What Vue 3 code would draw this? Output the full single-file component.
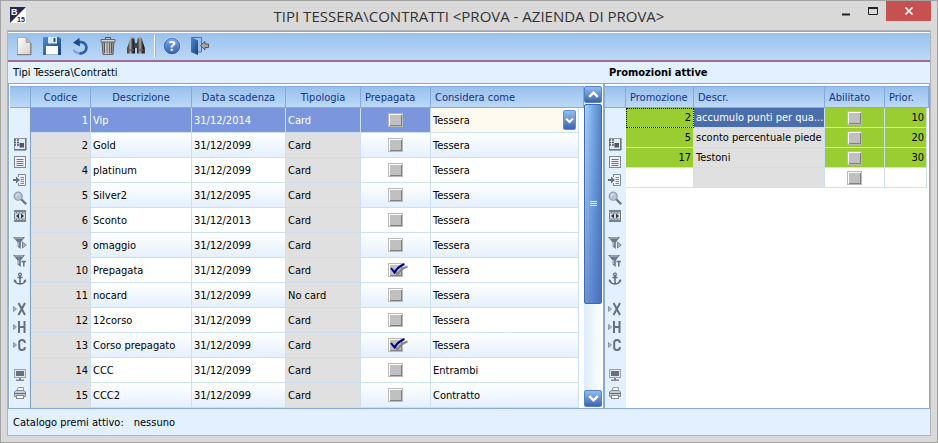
<script setup>
import { ref } from 'vue'

const toolbar = [
  { id: 'new', label: 'Nuovo' },
  { id: 'save', label: 'Salva' },
  { id: 'undo', label: 'Annulla' },
  { id: 'trash', label: 'Elimina' },
  { id: 'find', label: 'Cerca' },
  { id: 'sep' },
  { id: 'help', label: 'Guida' },
  { id: 'exit', label: 'Esci' },
]

const gutterGroups = [
  [['columns', 'Colonne'], ['list', 'Elenco'], ['insert', 'Inserisci'], ['zoom', 'Ingrandisci'], ['fit', 'Adatta']],
  [['filter', 'Filtra'], ['filterText', 'Filtro testo'], ['anchor', 'Ancora']],
  [['x', 'Esporta X'], ['h', 'Esporta H'], ['c', 'Esporta C']],
  [['screen', 'Anteprima'], ['print', 'Stampa']],
]

const cards = ref([
  { code: 1, name: 'Vip', date: '31/12/2014', type: 'Card', prepaid: false, as: 'Tessera' },
  { code: 2, name: 'Gold', date: '31/12/2099', type: 'Card', prepaid: false, as: 'Tessera' },
  { code: 4, name: 'platinum', date: '31/12/2099', type: 'Card', prepaid: false, as: 'Tessera' },
  { code: 5, name: 'Silver2', date: '31/12/2095', type: 'Card', prepaid: false, as: 'Tessera' },
  { code: 6, name: 'Sconto', date: '31/12/2013', type: 'Card', prepaid: false, as: 'Tessera' },
  { code: 9, name: 'omaggio', date: '31/12/2099', type: 'Card', prepaid: false, as: 'Tessera' },
  { code: 10, name: 'Prepagata', date: '31/12/2099', type: 'Card', prepaid: true, as: 'Tessera' },
  { code: 11, name: 'nocard', date: '31/12/2099', type: 'No card', prepaid: false, as: 'Tessera' },
  { code: 12, name: '12corso', date: '31/12/2099', type: 'Card', prepaid: false, as: 'Tessera' },
  { code: 13, name: 'Corso prepagato', date: '31/12/2099', type: 'Card', prepaid: true, as: 'Tessera' },
  { code: 14, name: 'CCC', date: '31/12/2099', type: 'Card', prepaid: false, as: 'Entrambi' },
  { code: 15, name: 'CCC2', date: '31/12/2099', type: 'Card', prepaid: false, as: 'Contratto' },
])

const promos = ref([
  { code: '2', name: 'accumulo punti per qua...', enabled: false, priority: '10' },
  { code: '5', name: 'sconto percentuale piede', enabled: false, priority: '20' },
  { code: '17', name: 'Testoni', enabled: false, priority: '30' },
  { code: '', name: '', enabled: false, priority: '' },
])

const panels = ['cards', 'promos']
</script>

<template>
  <div class="window">
    <header class="titlebar">
      <svg class="app-icon" viewBox="0 0 16 16" aria-hidden="true">
        <rect width="16" height="16" fill="#fff" />
        <path d="M0 0H16L0 16Z" fill="#26265a" />
        <text x="1" y="8" class="logo-b">B</text>
        <text x="7" y="15" class="logo-n">15</text>
      </svg>
      <h1>TIPI TESSERA\CONTRATTI &lt;PROVA - AZIENDA DI PROVA&gt;</h1>
      <div class="controls">
        <button type="button" aria-label="Riduci a icona">
          <svg viewBox="0 0 10 10"><path d="M1 8.5H9" stroke="#222" stroke-width="2" /></svg>
        </button>
        <button type="button" aria-label="Ingrandisci">
          <svg viewBox="0 0 10 10"><path d="M.5 2V8.5H9.5V2" fill="none" stroke="#222" /><path d="M0 2H10" stroke="#222" stroke-width="2" /></svg>
        </button>
        <button type="button" class="close" aria-label="Chiudi">
          <svg viewBox="0 0 10 10"><path d="M1.5 1.5L8.5 8.5M8.5 1.5L1.5 8.5" stroke="#fff" stroke-width="1.7" /></svg>
        </button>
      </div>
    </header>

    <main class="client">
      <nav class="toolbar">
        <template v-for="t in toolbar" :key="t.id">
          <span v-if="t.id === 'sep'" class="sep"></span>
          <button v-else type="button" :aria-label="t.label">
            <svg viewBox="0 0 20 20">
              <defs>
                <linearGradient id="gPaper" x1="0" y1="0" x2="1" y2="1"><stop offset="0" stop-color="#fff" /><stop offset="1" stop-color="#d4d0cb" /></linearGradient>
                <linearGradient id="gBlue" x1="0" y1="0" x2="1" y2="1"><stop offset="0" stop-color="#4c8fd0" /><stop offset="1" stop-color="#173f7e" /></linearGradient>
                <linearGradient id="gHelp" x1="0" y1="0" x2="0" y2="1"><stop offset="0" stop-color="#8caee6" /><stop offset="1" stop-color="#2c5cb8" /></linearGradient>
                <linearGradient id="gMetal" x1="0" y1="0" x2="1" y2="0"><stop offset="0" stop-color="#777" /><stop offset=".4" stop-color="#eee" /><stop offset="1" stop-color="#777" /></linearGradient>
                <linearGradient id="gDark" x1="0" y1="0" x2="1" y2="0"><stop offset="0" stop-color="#151515" /><stop offset=".4" stop-color="#aaa" /><stop offset=".7" stop-color="#333" /><stop offset="1" stop-color="#111" /></linearGradient>
              </defs>
              <template v-if="t.id === 'new'">
                <path d="M3.5 1.5H12L16.5 6.5V18.5H3.5Z" fill="url(#gPaper)" stroke="#a9a9a9" />
                <path d="M3 18.7H17V7" fill="none" stroke="#777" />
                <path d="M12 1.5V6.5H16.5Z" fill="#bdbab6" stroke="#999" stroke-width=".7" />
              </template>
              <template v-else-if="t.id === 'save'">
                <path d="M1 1H17L19 3V19H1Z" fill="url(#gBlue)" />
                <rect x="6" y="1" width="9" height="6.5" fill="#d9eaf7" /><rect x="11.5" y="2" width="2" height="4" fill="#245b9d" />
                <rect x="4" y="10" width="12" height="8.5" fill="#fff" /><path d="M4 18.5H16" stroke="#a8bccf" />
              </template>
              <template v-else-if="t.id === 'undo'">
                <path d="M8.5 6.2C13 5.2 16.5 7.8 16.5 11.6C16.5 15.5 12.8 18 9 17.3C6.5 16.9 4.6 15.6 3.6 13.8" fill="none" stroke="#7fa6dc" stroke-width="2.4" />
                <path d="M8.5 6.2C13 5.2 16.5 7.8 16.5 11.6C16.5 15.3 13 17.6 9.5 17.3" fill="none" stroke="#2c5fa8" stroke-width="2.6" />
                <path d="M3 6.8L9.4 1.8L10 10.6Z" fill="#1f478a" />
              </template>
              <template v-else-if="t.id === 'trash'">
                <path d="M4 6H16L15 18.5H5Z" fill="url(#gMetal)" stroke="#666" />
                <path d="M6.5 7V17M9 7V17.5M11.3 7V17.5M13.5 7V17" stroke="#555" stroke-width="1" />
                <path d="M3 3.5H17V6H3Z" fill="#d6d6d6" stroke="#666" /><path d="M7.5 3V1.5H12.5V3" fill="none" stroke="#555" />
              </template>
              <template v-else-if="t.id === 'find'">
                <path d="M4.5 2H8.2L9 8V17.5H1.2V12Z" fill="url(#gDark)" /><path d="M11.8 2H15.5L18.8 12V17.5H11V8Z" fill="url(#gDark)" />
                <rect x="8" y="7" width="4" height="5" fill="#444" /><path d="M1.5 14H8.5M11.5 14H18.5" stroke="#555" /><path d="M5 2H8M12 2H15" stroke="#999" stroke-width="1.5" />
              </template>
              <template v-else-if="t.id === 'help'">
                <circle cx="10" cy="10" r="8.6" fill="url(#gHelp)" stroke="#cfd9ee" stroke-width="1" />
                <circle cx="10" cy="10" r="7.8" fill="none" stroke="#3560b4" stroke-width=".7" />
                <text x="10" y="15" text-anchor="middle" class="help-mark">?</text>
              </template>
              <template v-else>
                <path d="M1.5 1.5H11.5V16H1.5Z" fill="#9fc0ea" stroke="#4a73ae" />
                <path d="M1 1L8 4.5V19L1 16Z" fill="url(#gBlue)" />
                <path d="M10.5 9.5L15 5.5V8H18.5V11.5H15V14Z" fill="#a5a5a5" stroke="#4d4d4d" stroke-width=".9" />
              </template>
            </svg>
          </button>
        </template>
      </nav>

      <div class="workspace">
        <section v-for="p in panels" :key="p" class="panel" :class="p">
          <h2>{{ p === 'cards' ? 'Tipi Tessera\\Contratti' : 'Promozioni attive' }}</h2>
          <div class="grid">
            <div class="gutter">
              <div class="gutter-head"></div>
              <div class="gutter-tools">
                <div v-for="(g, i) in gutterGroups" :key="i" class="tool-group">
                  <button v-for="[id, label] in g" :key="id" type="button" :aria-label="label">
                    <svg viewBox="0 0 14 14">
                      <template v-if="id === 'columns'">
                        <rect x="1.5" y="1.5" width="11" height="11" fill="#e4eaf0" stroke="#8c98a6" />
                        <path d="M1 3H6M1 5.5H6M1 8H6" stroke="#4d5966" stroke-width="1.4" stroke-dasharray="2 1" /><rect x="6.5" y="6" width="4.5" height="4.5" fill="#4d5966" /><path d="M13 1V13H1" fill="none" stroke="#4d5966" />
                      </template>
                      <template v-else-if="id === 'list'">
                        <rect x="1.5" y="1.5" width="11" height="11" fill="#f0f4f8" stroke="#7a8794" />
                        <path d="M3.5 4.5H10.5M3.5 6.5H10.5M3.5 8.5H10.5M3.5 10.5H10.5" stroke="#687480" />
                      </template>
                      <template v-else-if="id === 'insert'">
                        <path d="M5.5 1.5H12.5V12.5H5.5" fill="#f0f4f8" stroke="#7a8794" /><path d="M5.5 1V4M5.5 10V13" stroke="#7a8794" />
                        <path d="M7.5 4.5H11M7.5 6.5H11M7.5 8.5H11M7.5 10.5H11" stroke="#77838f" /><path d="M0 6H3V3.5L7 7L3 10.5V8H0Z" fill="#65717d" />
                      </template>
                      <template v-else-if="id === 'zoom'">
                        <path d="M8.5 8.5L12.5 12.5" stroke="#687480" stroke-width="2.4" stroke-linecap="round" /><circle cx="5.2" cy="5.2" r="4" fill="#bac7d3" stroke="#929eaa" stroke-width="1.3" />
                        <path d="M3 5Q3.5 3 5.5 3" stroke="#eef4fa" fill="none" />
                      </template>
                      <template v-else-if="id === 'fit'">
                        <rect x="1" y="1" width="12" height="12" fill="#76828e" /><path d="M1 3.5H13M1 10.5H13" stroke="#cbd5df" stroke-width=".8" stroke-dasharray="2 1" />
                        <rect x="2" y="4.5" width="10" height="5" fill="#d4dde6" /><path d="M6 4.5V9.5L3 7ZM8 4.5V9.5L11 7Z" fill="#2e3740" />
                      </template>
                      <template v-else-if="id === 'filter' || id === 'filterText'">
                        <path d="M0 1H12L7.8 6.5V13L4.6 10.5V6.5Z" fill="#6d7a86" /><path d="M2 2H10" stroke="#b5c1cd" /><path d="M5.6 6V10" stroke="#b2bec9" />
                        <path v-if="id === 'filter'" d="M9.5 6L13.3 9L9.5 12Z" fill="#a9b8c7" stroke="#6c7986" stroke-width=".8" />
                        <path v-else d="M8.5 7.5H13M10.8 7.5V12.5" stroke="#61707d" stroke-width="1.5" />
                      </template>
                      <template v-else-if="id === 'anchor'">
                        <circle cx="7" cy="2.5" r="1.4" fill="none" stroke="#5d6a77" stroke-width="1.2" /><path d="M7 4V12M4.5 5.5H9.5M1.8 8.5C2.5 13 11.5 13 12.2 8.5" fill="none" stroke="#5d6a77" stroke-width="1.5" />
                        <path d="M.5 9.5L1.5 7L4 9.5ZM13.5 9.5L12.5 7L10 9.5Z" fill="#5d6a77" />
                      </template>
                      <template v-else-if="id === 'screen'">
                        <rect x="1.5" y="1.5" width="11" height="8" fill="#e4e8ec" stroke="#98a2ac" /><rect x="3" y="3" width="8" height="5" fill="#65717d" /><path d="M6 10H8V11.5H11V13H3V11.5H6Z" fill="#7d8893" />
                      </template>
                      <template v-else-if="id === 'print'">
                        <path d="M4 5L5 1.5H10.5V5" fill="#fff" stroke="#8d98a3" /><path d="M1.5 6L3 4.5H11L12.5 6V10.5H1.5Z" fill="#c6ced6" stroke="#7e8994" /><path d="M1.5 7.5H12.5" stroke="#5f6b77" />
                        <rect x="3.5" y="9.5" width="7" height="3" fill="#fff" stroke="#7e8994" />
                      </template>
                      <template v-else>
                        <path d="M.5 4.5L3.5 7L.5 9.5Z" fill="#a9b8c7" stroke="#7c8996" stroke-width=".8" />
                        <path v-if="id === 'x'" d="M5.5 1L12 13M12 1L5.5 13" stroke="#63707d" stroke-width="2" />
                        <path v-else-if="id === 'h'" d="M6 1V13M11.5 1V13M6 7H11.5" stroke="#63707d" stroke-width="2" />
                        <path v-else d="M11.8 5V4.5Q11.8 2 9 2Q6.2 2 6.2 4.5V9.5Q6.2 12 9 12Q11.8 12 11.8 9.5V9" fill="none" stroke="#63707d" stroke-width="2" />
                      </template>
                    </svg>
                  </button>
                </div>
              </div>
            </div>

            <div class="table-area">
              <table v-if="p === 'cards'">
                <colgroup><col class="w60" /><col class="w101" /><col class="w94" /><col class="w75" /><col class="w70" /><col /><col class="w5" /></colgroup>
                <thead>
                  <tr><th>Codice</th><th>Descrizione</th><th>Data scadenza</th><th>Tipologia</th><th class="left">Prepagata</th><th colspan="2" class="left">Considera come</th></tr>
                </thead>
                <tbody>
                  <tr v-for="(r, i) in cards" :key="r.code" :class="{ selected: i === 0 }">
                    <td class="num locked">{{ r.code }}</td>
                    <td>{{ r.name }}</td>
                    <td>{{ r.date }}</td>
                    <td class="locked">{{ r.type }}</td>
                    <td class="tick">
                      <label class="check">
                        <input v-model="r.prepaid" type="checkbox" :aria-label="'Prepagata ' + r.name" />
                        <svg v-if="r.prepaid" viewBox="0 0 20 14" aria-hidden="true">
                          <path d="M6 7L9.5 11.5Q13 5.5 19.5 3.5" fill="none" stroke="#858585" stroke-width="2.2" /><path d="M3 5L6.5 9.5Q10 3.5 16.5 1" fill="none" stroke="#00008b" stroke-width="2" />
                        </svg>
                      </label>
                    </td>
                    <td :class="{ editing: i === 0 }">
                      <div v-if="i === 0" class="combo">
                        <select v-model="r.as" aria-label="Considera come">
                          <option>Tessera</option><option>Contratto</option><option>Entrambi</option>
                        </select>
                        <span class="drop"><svg viewBox="0 0 9 7"><path d="M1 1.5L4.5 5L8 1.5" fill="none" stroke="#fff" stroke-width="2" /></svg></span>
                      </div>
                      <template v-else>{{ r.as }}</template>
                    </td>
                    <td class="filler"></td>
                  </tr>
                </tbody>
              </table>
              <table v-else>
                <colgroup><col class="w68" /><col /><col class="w60" /><col class="w42" /><col class="w2" /></colgroup>
                <thead>
                  <tr><th class="left">Promozione</th><th class="left">Descr.</th><th class="left">Abilitato</th><th colspan="2" class="left">Prior.</th></tr>
                </thead>
                <tbody>
                  <tr v-for="(r, i) in promos" :key="i" :class="{ active: r.code, current: i === 0 }">
                    <td class="num focusable">{{ r.code }}</td>
                    <td class="locked name">{{ r.name }}</td>
                    <td class="tick"><label class="check"><input v-model="r.enabled" type="checkbox" :aria-label="'Abilitato ' + r.name" /></label></td>
                    <td class="num">{{ r.priority }}</td>
                    <td class="filler"></td>
                  </tr>
                </tbody>
              </table>
            </div>

            <div v-if="p === 'cards'" class="scrollbar">
              <button type="button" aria-label="Scorri su"><svg viewBox="0 0 9 7"><path d="M1 5.5L4.5 2L8 5.5" fill="none" stroke="#fff" stroke-width="2" /></svg></button>
              <div class="track"><div class="thumb"><i></i></div></div>
              <button type="button" aria-label="Scorri giù"><svg viewBox="0 0 9 7"><path d="M1 1.5L4.5 5L8 1.5" fill="none" stroke="#fff" stroke-width="2" /></svg></button>
            </div>
          </div>
        </section>
      </div>

      <footer class="status"><span>Catalogo premi attivo:</span><span>nessuno</span></footer>
    </main>
  </div>
</template>

<style>
body { margin: 0; }
</style>

<style scoped>
* { box-sizing: border-box; }
button { border: 0; padding: 0; margin: 0; background: none; display: flex; align-items: center; justify-content: center; }
svg { display: block; }
.window {
  min-height: 100vh; display: flex; flex-direction: column; padding: 0 6px 6px;
  background: #d9d9d9; border: 1px solid #a3a3a3;
  font-family: "DejaVu Sans Condensed", "DejaVu Sans", Tahoma, sans-serif; font-size: 11px; line-height: 14px; color: #000;
}
.titlebar { height: 29px; display: grid; grid-template-columns: 130px 1fr 130px; }
.app-icon { width: 16px; height: 16px; margin: 6px 0 0 3px; }
.logo-b { font: bold 9px "Liberation Sans", sans-serif; fill: #fff; }
.logo-n { font: bold 7px "Liberation Sans", sans-serif; fill: #26265a; }
h1 { margin: 0; text-align: center; font: 15px/30px "Open Sans", "Noto Sans", sans-serif; color: #333; white-space: nowrap; }
.controls { display: flex; justify-content: flex-end; align-items: flex-start; }
.controls button { width: 27px; height: 20px; }
.controls svg { width: 10px; height: 10px; }
.controls .close { width: 45px; background: #c75050; }

.client { flex: 1; display: flex; flex-direction: column; border: 1px solid #b0b4b8; background: #e2f0ff; }
.toolbar { height: 31px; display: flex; align-items: center; padding: 0 2px; border-top: 1px solid #7fa8dc; border-bottom: 2px solid #a06c96; box-shadow: inset 0 1px #fff; background: linear-gradient(#98c0ec, #bcd9f7); }
.toolbar button { width: 28px; height: 24px; }
.toolbar svg { width: 20px; height: 20px; }
.help-mark { font: bold 14px "Open Sans", sans-serif; fill: #fff; }
.sep { width: 4px; height: 22px; border-left: 1px solid #fff; box-shadow: inset 1px 0 #8db3e0; margin-left: 4px; }

.workspace { flex: 1; display: grid; grid-template-columns: minmax(0, 597fr) minmax(0, 325fr); }
.panel { display: flex; flex-direction: column; }
h2 { margin: 0; padding: 4px 5px 3px; height: 21px; font-size: 11px; line-height: 14px; font-weight: normal; }
.promos h2 { padding-left: 4px; font-weight: bold; }
.grid { flex: 1; display: flex; background: #fff; border: 1px solid #8aaad4; padding: 2px 0 0 1px; }
.cards .grid { border-right-width: 2px; }
.promos .grid { border-left: 0; padding-left: 0; }
.gutter { width: 21px; display: flex; flex-direction: column; background: #e2f0ff; }
.gutter-head { height: 22px; background: linear-gradient(#98c0ec, #bcd9f7); border: 1px solid #84aadd; border-width: 1px 1px 1px 0; }
.gutter-tools { flex: 1; display: flex; flex-direction: column; padding-top: 27px; }
.cards .gutter-tools { border-right: 1px solid #7d9fd0; }
.tool-group { margin-bottom: 12px; }
.tool-group:first-child { margin-bottom: 9px; }
.tool-group:last-child { margin-bottom: 0; }
.tool-group button { width: 20px; height: 18px; }
.tool-group svg { width: 14px; height: 14px; }
.table-area { flex: 1; min-width: 0; }

table { width: 100%; table-layout: fixed; border-collapse: separate; border-spacing: 0; }
.w60 { width: 60px; } .w101 { width: 101px; } .w94 { width: 94px; } .w75 { width: 75px; } .w70 { width: 70px; }
.w68 { width: 68px; } .w42 { width: 42px; } .w5 { width: 5px; } .w2 { width: 2px; }
th { height: 22px; padding: 1px 4px 0; font-weight: normal; color: #12318a; background: linear-gradient(#98c0ec, #bcd9f7); border: 1px solid #84aadd; border-width: 1px 1px 1px 0; white-space: nowrap; }
th.left { text-align: left; }
td { height: 25px; padding: 2px 2px 0; white-space: nowrap; overflow: hidden; border: 1px solid #cddff2; border-width: 0 1px 1px 0; }
.cards tbody tr:nth-child(even) td { background: linear-gradient(#fff, #e4f0fd); }
.num { text-align: right; }
.cards tbody tr .locked, .locked { background: #e0e0e0; }
.cards tbody tr:nth-child(even) .locked { background: #e0e0e0; }
.cards tbody tr.selected td { background: #7b96dd; color: #fff; }
.cards tbody tr.selected .editing { background: #fffaf0; color: #000; padding-top: 0; }
.cards tbody tr td.filler, .filler { background: #fff !important; border: 0; padding: 0; }
.promos td { height: 20px; padding-top: 0; }
.promos .active td { background: #9acd32; }
.promos .active .name { background: #e0e0e0; }
.promos .current .name { background: #4a6dab; color: #fff; }
.promos .name { padding-right: 0; }
.promos .current .focusable { outline: 1px dotted #000; outline-offset: -1px; }

.tick { text-align: center; padding: 0; }
.check { position: relative; display: inline-block; width: 15px; height: 14px; vertical-align: middle; }
.check input { appearance: none; display: block; width: 15px; height: 14px; margin: 0; background: #c0c0c0; border: 1px solid #bababa; box-shadow: inset 1px 1px #fff, inset -1px -1px #808080; }
.check svg { position: absolute; left: 0; top: 0; width: 20px; height: 14px; }
.combo { display: flex; align-items: center; }
.combo select { flex: 1; min-width: 0; appearance: none; border: 0; padding: 1px 0 0; margin: 0; background: none; font: inherit; color: inherit; outline: 0; }
.drop { width: 13px; height: 20px; display: flex; align-items: center; justify-content: center; border: 1px solid #5f8fcd; border-radius: 2px; background: linear-gradient(#8fc0ee, #3d62ae); }
.drop svg { width: 9px; height: 7px; }

.scrollbar { width: 18px; display: flex; flex-direction: column; margin: 0 1px 1px 0; background: linear-gradient(90deg, #dcebfb, #fff); }
.scrollbar button { height: 17px; border: 1px solid #5581c4; border-radius: 2px; background: linear-gradient(#8fc0ee, #3d62ae); }
.scrollbar button svg { width: 11px; height: 9px; }
.track { flex: 1; padding-top: 1px; }
.thumb { height: 70%; display: flex; align-items: center; justify-content: center; border: 1px solid #4268b0; border-radius: 2px; background: linear-gradient(#fff0, #3c5fb488), linear-gradient(90deg, #a4d2f8, #6fa3e0 60%, #5a83cc); }
.thumb i { width: 7px; height: 6px; background: repeating-linear-gradient(#d8ebff 0 1px, transparent 1px 2px); }

.status { height: 26px; display: flex; gap: 10px; padding: 7px 5px 5px; }
</style>
